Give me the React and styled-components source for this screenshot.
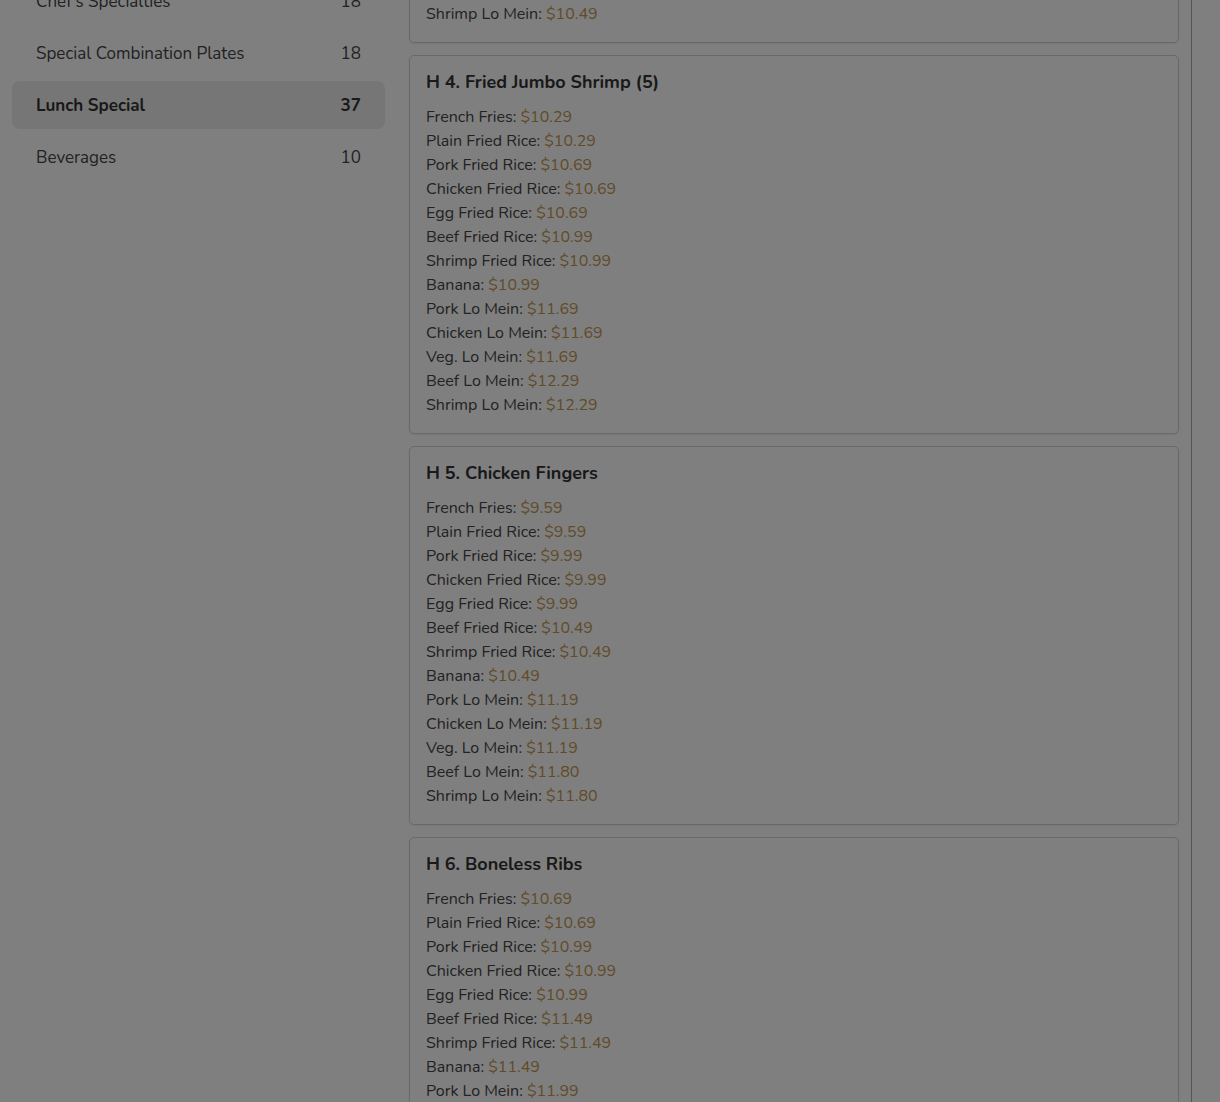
import { useLayoutEffect } from "react";
import styled, { createGlobalStyle } from "styled-components";

const GlobalStyle = createGlobalStyle`
  body {
    margin: 0;
    background: #fff;
    font-family: "Nunito", Lato, "Noto Sans", sans-serif;
    color: #444;
  }
`;

const Page = styled.div`
  display: flex;
  align-items: flex-start;
`;

const Sidebar = styled.nav`
  width: 397px;
  box-sizing: border-box;
  padding: 15px 12px 12px;
  display: flex;
  flex-direction: column;
  gap: 4px;
`;

const Category = styled.div`
  display: flex;
  justify-content: space-between;
  align-items: center;
  height: 48px;
  padding: 0 24px;
  border-radius: 8px;
  font-size: 17px;
  color: ${(p) => (p.active ? "#333" : "#444")};
  font-weight: ${(p) => (p.active ? 700 : 400)};
  background: ${(p) => (p.active ? "#ececec" : "transparent")};
`;

const Main = styled.main`
  width: 795px;
  box-sizing: border-box;
  padding: 12px;
  border-right: 1px solid #aaa;
  display: flex;
  flex-direction: column;
  gap: 12px;
`;

const Card = styled.section`
  border: 1px solid #d2d2d2;
  border-radius: 5px;
  padding: 15px 16px 16px;
  box-shadow: 0 1px 2px rgba(0, 0, 0, 0.08);
`;

const CardTitle = styled.h3`
  margin: 0 0 12px;
  font-size: 18px;
  line-height: 22px;
  font-weight: 700;
  color: #333;
`;

const Line = styled.div`
  font-size: 16px;
  line-height: 24px;
  color: #444;
`;

const Price = styled.span`
  color: #c29652;
`;

const Overlay = styled.div`
  position: fixed;
  inset: 0;
  background: rgba(0, 0, 0, 0.5);
`;

const categories = [
  ["Appetizers", 24], ["Soup", 12], ["Fried Rice", 9], ["Lo Mein", 8],
  ["Chow Mein", 7], ["Chop Suey", 7], ["Chow Mei Fun", 8], ["Egg Foo Young", 6],
  ["Sweet & Sour", 4], ["Pork", 8], ["Chicken", 16], ["Beef", 10],
  ["Seafood", 12], ["Vegetables", 9], ["Moo Shu", 5], ["Diet Menu", 10],
  ["Side Orders", 12], ["Kid's Menu", 6], ["Family Dinners", 3], ["Combination Platters", 28],
  ["Party Trays", 6], ["Chef's Specialties", 18], ["Special Combination Plates", 18],
  ["Lunch Special", 37], ["Beverages", 10],
];

const sides = [
  "French Fries", "Plain Fried Rice", "Pork Fried Rice", "Chicken Fried Rice",
  "Egg Fried Rice", "Beef Fried Rice", "Shrimp Fried Rice", "Banana",
  "Pork Lo Mein", "Chicken Lo Mein", "Veg. Lo Mein", "Beef Lo Mein", "Shrimp Lo Mein",
];

const dishes = [
  { title: "H 1. Chicken Wings (4)", prices: ["9.29", "9.29", "9.69", "9.69", "9.69", "9.99", "9.99", "9.99", "10.49", "10.49", "10.49", "10.99", "10.99"] },
  { title: "H 2. Boneless Chicken", prices: ["8.99", "8.99", "9.39", "9.39", "9.39", "9.69", "9.69", "9.69", "10.19", "10.19", "10.19", "10.49", "10.49"] },
  { title: "H 3. Teriyaki Chicken (2)", prices: ["8.79", "8.79", "9.19", "9.19", "9.19", "9.49", "9.49", "9.49", "9.99", "9.99", "9.99", "10.49", "10.49"] },
  { title: "H 4. Fried Jumbo Shrimp (5)", prices: ["10.29", "10.29", "10.69", "10.69", "10.69", "10.99", "10.99", "10.99", "11.69", "11.69", "11.69", "12.29", "12.29"] },
  { title: "H 5. Chicken Fingers", prices: ["9.59", "9.59", "9.99", "9.99", "9.99", "10.49", "10.49", "10.49", "11.19", "11.19", "11.19", "11.80", "11.80"] },
  { title: "H 6. Boneless Ribs", prices: ["10.69", "10.69", "10.99", "10.99", "10.99", "11.49", "11.49", "11.49", "11.99", "11.99", "11.99", "12.49", "12.49"] },
  { title: "H 7. Fried Scallops (8)", prices: ["10.29", "10.29", "10.69", "10.69", "10.69", "10.99", "10.99", "10.99", "11.69", "11.69", "11.69", "12.29", "12.29"] },
];

export default function App() {
  useLayoutEffect(() => {
    window.scrollTo(0, 1130);
  }, []);

  return (
    <>
      <GlobalStyle />
      <Page>
        <Sidebar>
          {categories.map(([name, count]) => (
            <Category key={name} active={name === "Lunch Special"}>
              <span>{name}</span>
              <span>{count}</span>
            </Category>
          ))}
        </Sidebar>
        <Main>
          {dishes.map((d) => (
            <Card key={d.title}>
              <CardTitle>{d.title}</CardTitle>
              {sides.map((s, i) => (
                <Line key={s}>
                  {s}: <Price>${d.prices[i]}</Price>
                </Line>
              ))}
            </Card>
          ))}
        </Main>
      </Page>
      <Overlay />
    </>
  );
}
